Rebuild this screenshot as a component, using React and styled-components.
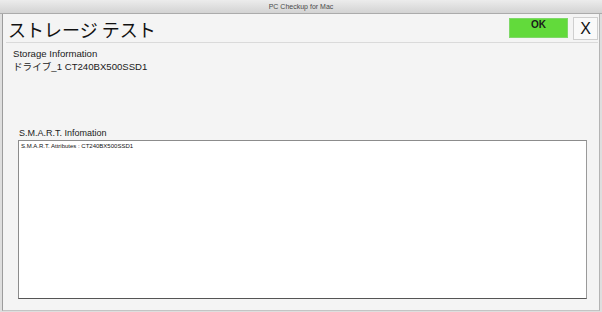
import React from "react";
import styled, { createGlobalStyle } from "styled-components";

const GlobalStyle = createGlobalStyle`
  html, body {
    margin: 0;
    padding: 0;
    background: #dedede;
  }
  body {
    font-family: "Liberation Sans", "Noto Sans CJK JP", Arial, sans-serif;
  }
`;

export default function App() {
  return (
    <>
      <GlobalStyle />
      <Frame>
        <TitleBar>PC Checkup for Mac</TitleBar>
        <Window>
          <Header>
            <Heading>ストレージ テスト</Heading>
            <Spacer />
            <OkButton>OK</OkButton>
            <CloseButton>X</CloseButton>
          </Header>
          <Info>
            <InfoLine>Storage Information</InfoLine>
            <InfoLine>ドライブ_1 CT240BX500SSD1</InfoLine>
          </Info>
          <Smart>
            <SmartLabel>S.M.A.R.T. Infomation</SmartLabel>
            <SmartBox>S.M.A.R.T. Attributes : CT240BX500SSD1</SmartBox>
          </Smart>
        </Window>
      </Frame>
    </>
  );
}

// Styled Components

const Frame = styled.div`
  width: 602px;
  height: 312px;
  display: flex;
  flex-direction: column;
  overflow: hidden;
`;

const TitleBar = styled.div`
  height: 13px;
  line-height: 13px;
  text-align: center;
  font-size: 7px;
  color: #4a4a4a;
  background: linear-gradient(#ececec, #d3d3d3);
  border-bottom: 1px solid #ababab;
`;

const Window = styled.div`
  flex: 1;
  margin: 0 2px 1px 2px;
  display: flex;
  flex-direction: column;
  background: #f4f4f4;
  border: 1px solid #9c9c9c;
  border-top: none;
  border-right-color: #b4b4b4;
  border-bottom-color: #c4c4c4;
`;

const Header = styled.div`
  display: flex;
  align-items: flex-start;
  height: 29px;
  margin: 0 1px 0 3px;
  padding: 3px 0 0 2px;
  box-sizing: border-box;
  border-bottom: 1px solid #dadada;
`;

const Heading = styled.div`
  margin-top: 3px;
  font-family: "Noto Sans CJK JP", sans-serif;
  font-size: 18px;
  line-height: 18px;
  color: #111;
`;

const Spacer = styled.div`
  flex: 1;
`;

const OkButton = styled.div`
  margin-top: 1px;
  width: 59px;
  height: 20px;
  box-sizing: border-box;
  background: #62da3b;
  border: 1px solid #7fd868;
  text-align: center;
  font-size: 10px;
  font-weight: bold;
  line-height: 10px;
  padding-top: 1px;
  color: #1a1a1a;
`;

const CloseButton = styled.div`
  margin-left: 5px;
  width: 25px;
  height: 23px;
  box-sizing: border-box;
  background: #f9f9f9;
  border: 1px solid #cfcfcf;
  text-align: center;
  font-size: 16px;
  line-height: 21px;
  color: #111;
`;

const Info = styled.div`
  padding: 4px 0 0 10px;
`;

const InfoLine = styled.div`
  font-family: "Liberation Sans", "Noto Sans CJK JP", sans-serif;
  font-size: 9.6px;
  line-height: 13px;
  color: #1a1a1a;
`;

const Smart = styled.div`
  flex: 1;
  display: flex;
  flex-direction: column;
  padding: 0 12px 11px 15px;
  justify-content: flex-end;
`;

const SmartLabel = styled.div`
  font-size: 9px;
  line-height: 12px;
  margin: 0 0 1px 1px;
  color: #222;
`;

const SmartBox = styled.div`
  height: 159px;
  box-sizing: border-box;
  background: #fff;
  border: 1px solid #8c8c8c;
  border-bottom-color: #555;
  border-right-color: #9a9a9a;
  padding: 2px 0 0 2px;
  font-size: 6px;
  line-height: 7px;
  color: #111;
`;
